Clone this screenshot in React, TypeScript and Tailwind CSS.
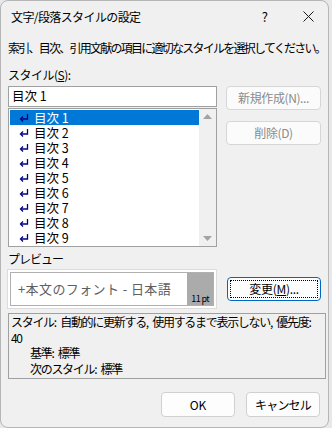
import React from 'react';

const font = { fontFamily: '"Noto Sans CJK JP", "Noto Sans", sans-serif' };

const items = ['目次 1', '目次 2', '目次 3', '目次 4', '目次 5', '目次 6', '目次 7', '目次 8', '目次 9'];

const ReturnMark = ({ light }: { light?: boolean }) => (
  <svg width="10" height="10" viewBox="0 0 10 10" className="shrink-0">
    <path d="M8.5 1v5H2" fill="none" stroke={light ? '#ffffff' : '#000080'} strokeWidth="1.3" />
    <path d="M4 3.5L1.5 6 4 8.5" fill="none" stroke={light ? '#ffffff' : '#000080'} strokeWidth="1.3" />
  </svg>
);

export default function App() {
  return (
    <div className="w-[332px] h-[428px] bg-[#e8e8e8] overflow-hidden text-[12px] text-black" style={font}>
      <div className="w-[329px] h-[428px] bg-[#f0f0f0] border border-[#b5b5b5] rounded-lg flex flex-col overflow-hidden">
        {/* title bar */}
        <div className="h-[31px] flex items-center pl-[10px] shrink-0">
          <span className="tracking-[-0.6px]">文字/段落スタイルの設定</span>
          <span className="ml-auto mr-[35px] text-[13px]">?</span>
          <svg width="11" height="11" viewBox="0 0 11 11" className="mr-[14px]">
            <path d="M0.5 0.5l10 10M10.5 0.5l-10 10" stroke="#1a1a1a" strokeWidth="1" />
          </svg>
        </div>

        <div className="px-[7px] flex flex-col">
          <div className="mt-[9px] leading-[14px] tracking-[-1.75px] whitespace-nowrap">
            索引、目次、引用文献の項目に適切なスタイルを選択してください。
          </div>
          <div className="mt-[13px] leading-[14px] tracking-[-0.5px]">
            スタイル(<span className="underline">S</span>):
          </div>

          <div className="flex mt-[4px]">
            <div className="w-[213px] flex flex-col">
              <div className="h-[21px] bg-white border border-[#a0a0a0] flex items-center pl-[3px] text-[12.5px]">
                目次 1
              </div>
              <div className="h-[139px] mt-[1px] bg-white border border-[#a0a0a0] flex">
                <div className="flex-1 pt-[1px] pl-[1px]">
                  {items.map((t, i) => (
                    <div
                      key={t}
                      className={
                        'h-[15px] flex items-center gap-[5px] pl-[9px] ' +
                        (i === 0 ? 'bg-[#0078d7] text-white' : 'text-black')
                      }
                    >
                      <ReturnMark light={false} />
                      <span className="block h-[15px] text-[12.5px] leading-[15px]">{t}</span>
                    </div>
                  ))}
                </div>
                <div className="w-[17px] bg-[#f0f0f0] flex flex-col items-center justify-between py-[5px]">
                  <svg width="9" height="5" viewBox="0 0 9 5">
                    <path d="M0 5L4.5 0 9 5z" fill="#a3a3a3" />
                  </svg>
                  <svg width="9" height="5" viewBox="0 0 9 5">
                    <path d="M0 0L4.5 5 9 0z" fill="#a3a3a3" />
                  </svg>
                </div>
              </div>
            </div>
            <div className="ml-[9px] flex flex-col gap-[11px]">
              <div className="w-[95px] h-[24px] rounded-[4px] border border-[#d6d6d6] bg-[#fbfbfb] flex items-center justify-center text-[#8a8a8a] tracking-[-0.4px]">
                新規作成(N)...
              </div>
              <div className="w-[95px] h-[24px] rounded-[4px] border border-[#d6d6d6] bg-[#fbfbfb] flex items-center justify-center text-[#8a8a8a] tracking-[-0.4px]">
                削除(D)
              </div>
            </div>
          </div>

          <div className="mt-[5px] leading-[14px] tracking-[-1px]">プレビュー</div>

          <div className="flex items-center mt-[4px]">
            <div className="w-[211px] h-[38px] bg-white border-2 border-white outline outline-1 outline-[#dcdcdc] flex">
              <div className="flex-1 bg-white border border-[#b0b0b0] border-r-0 flex items-center pl-[7px] text-[#606060] text-[13px] tracking-[0.4px]">
                +本文のフォント - 日本語
              </div>
              <div className="w-[27px] bg-[#ababab] border border-[#b0b0b0] border-l-0 flex items-end justify-center pb-[1px] text-[9px] leading-[10px] tracking-[-0.6px]">
                11 pt
              </div>
            </div>
            <div className="ml-[11px] w-[95px] h-[24px] rounded-[4px] border border-[#0067c0] bg-[#fdfdfd] p-[2px]">
              <div className="w-full h-full border border-dotted border-black flex items-center justify-center tracking-[-0.3px]">
                変更(<span className="underline">M</span>)...
              </div>
            </div>
          </div>

          <div className="mt-[5px] w-[318px] h-[66px] border border-[#a0a0a0] bg-[#f0f0f0] px-[2px] pt-[0px] leading-[15.5px] tracking-[-1.3px] [word-spacing:3px]">
            <div className="whitespace-nowrap">スタイル: 自動的に更新する, 使用するまで表示しない, 優先度:</div>
            <div>40</div>
            <div className="pl-[19px]">基準: 標準</div>
            <div className="pl-[19px]">次のスタイル: 標準</div>
          </div>

          <div className="flex justify-end gap-[11px] mt-[13px] pr-[1px]">
            <div className="w-[74px] h-[25px] rounded-[4px] border border-[#d0d0d0] bg-[#fdfdfd] flex items-center justify-center">
              OK
            </div>
            <div className="w-[74px] h-[25px] rounded-[4px] border border-[#d0d0d0] bg-[#fdfdfd] flex items-center justify-center tracking-[-0.8px]">
              キャンセル
            </div>
          </div>
        </div>
      </div>
    </div>
  );
}
